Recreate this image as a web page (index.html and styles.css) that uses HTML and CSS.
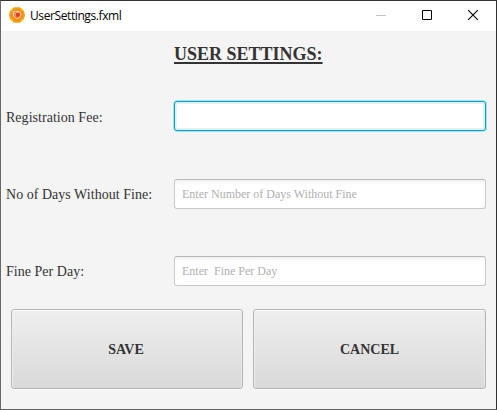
FILE: index.html
```html
<!DOCTYPE html>
<html lang="en">
<head>
<meta charset="utf-8">
<title>UserSettings.fxml</title>
<link rel="stylesheet" href="styles.css">
</head>
<body>
<div class="window">
  <header class="titlebar">
    <svg class="app-icon" width="16" height="16" viewBox="0 0 16 16">
      <path d="M5 .3h6L15 4l1 4-1 4-4 3.700H5L1 12 0 8l1-4z" fill="#f9a011"/>
      <circle cx="8" cy="8" r="6.300" fill="#fa8c10"/>
      <path d="M2 4l2-2M12 2l2 2M2 12l2 2M12 14l2-2" stroke="#fdbd25" stroke-width="1.500"/>
      <path d="M4.300 5l2.200-.7 4.200.4 1.300 3-1.500 3-3.200.8-2.800-2.500z" fill="#f4602c" stroke="#ffe1c4"/>
      <path d="M3.500 4.500l3 2 4-2M6 6.500v3" fill="none" stroke="#ffe1c4" stroke-width=".7"/>
      <circle cx="8.800" cy="7.800" r="2" fill="#ef3b23"/>
    </svg>
    <span class="caption">UserSettings.fxml</span>
    <div class="controls">
      <svg width="46" height="30" viewBox="0 0 46 30"><path d="M18 14.500h10" stroke="#c4c4c4"/></svg>
      <svg width="46" height="30" viewBox="0 0 46 30"><path d="M18.500 9.500h9v9h-9z" fill="none" stroke="#000"/></svg>
      <svg width="46" height="30" viewBox="0 0 46 30"><path d="M18.200 9.200l9.600 9.600M27.800 9.200l-9.600 9.600" stroke="#000" stroke-width="1.100"/></svg>
    </div>
  </header>
  <main class="content">
    <h1 class="heading">USER SETTINGS:</h1>
    <form class="form">
      <label class="label first" for="fee">Registration Fee:</label>
      <input class="field focused" id="fee" type="text">
      <label class="label" for="days">No of Days Without Fine:</label>
      <input class="field" id="days" type="text" placeholder="Enter Number of Days Without Fine">
      <label class="label" for="fine">Fine Per Day:</label>
      <input class="field" id="fine" type="text" placeholder="Enter  Fine Per Day">
    </form>
    <div class="actions">
      <button class="button save" type="button">SAVE</button>
      <button class="button cancel" type="button">CANCEL</button>
    </div>
  </main>
</div>
</body>
</html>
```
FILE: styles.css
```css
* { box-sizing: border-box; }
body { margin: 0; font-family: "Liberation Serif", serif; color: #333; }
.window {
  width: 497px;
  height: 410px;
  border: 1px solid #323236;
  border-left-color: #68686a;
  border-bottom-color: #626262;
  background: #f4f4f4;
  overflow: hidden;
}
.titlebar {
  display: flex;
  align-items: center;
  height: 30px;
  padding-left: 8px;
  background: #fff;
}
.app-icon { margin-top: -2px; }
.caption {
  margin: 0 auto 0 5px;
  font: 12px/16px "Open Sans", sans-serif;
  letter-spacing: -0.4px;
  color: #000;
}
.controls { display: flex; }
.heading {
  margin: 0;
  padding: 13px 0 0 173px;
  height: 47px;
  font-size: 18px;
  line-height: 21px;
  text-decoration: underline;
  text-decoration-thickness: 1.5px;
  text-underline-offset: 2px;
}
.form {
  display: grid;
  grid-template-columns: 168px 312px;
  grid-template-rows: 76px 80px 74px;
  align-items: center;
  padding-left: 5px;
}
.label { padding-top: 2px; font-size: 14px; line-height: 18px; letter-spacing: 0.03px; }
.first { padding-top: 4px; }
.field {
  width: 312px;
  height: 30px;
  padding: 0 7px;
  border: 1px solid #c8c8c8;
  border-top-color: #b8b8b8;
  border-radius: 3px;
  outline: none;
  background: linear-gradient(#f2f2f2, #fff 5px);
  font: 12px "Liberation Serif", serif;
}
.field::placeholder { color: #b0b0b0; opacity: 1; }
.focused {
  border-color: #039ed3;
  background: #fff;
  box-shadow: 0 0 0 1px #b4e0ee, inset 0 0 0 2px #def1f7;
}
.actions { display: flex; gap: 10px; padding: 1px 10px 0; }
.button {
  height: 80px;
  padding: 2px 0 0;
  border: 1px solid #b5b5b5;
  border-radius: 3px;
  background: linear-gradient(#efefef, #d9d9d9);
  box-shadow: inset 0 1px #fcfcfc, inset 1px 0 #eee, inset -1px 0 #e8e8e8, 0 1px #fafafa;
  font: bold 14px "Liberation Serif", serif;
  color: #333;
}
.save { width: 232px; padding-right: 2px; }
.cancel { width: 233px; }
```
